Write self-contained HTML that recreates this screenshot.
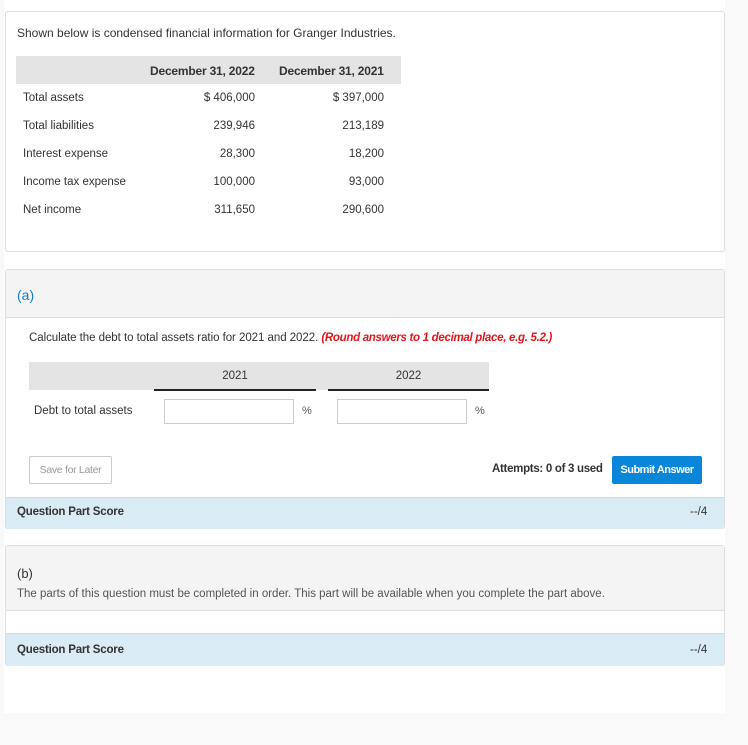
<!DOCTYPE html>
<html><head><style>
body{margin:0;background:#f9f9f9;font-family:"Liberation Sans",sans-serif;color:#333;font-size:12px;}
.wrap{position:absolute;left:4px;top:0;width:721px;height:713px;background:#fff;}
.a{position:absolute;white-space:nowrap;}
.panel{position:absolute;border:1px solid #ddd;border-radius:3px;box-sizing:border-box;background:#fff;}
.r{text-align:right;}
</style></head><body>
<div class="wrap"></div>
<div class="panel" style="left:5px;top:11px;width:720px;height:241px;"></div>
<div class="a" style="left:17px;top:26px;font-size:12px;letter-spacing:0;">Shown below is condensed financial information for Granger Industries.</div>
<div class="a" style="left:16px;top:56px;width:385px;height:28px;background:#e4e4e4;"></div>
<div class="a" style="left:150px;top:64px;font-weight:bold;font-size:12px;letter-spacing:-0.2px;">December 31, 2022</div>
<div class="a" style="left:279px;top:64px;font-weight:bold;font-size:12px;letter-spacing:-0.2px;">December 31, 2021</div>
<div style="font-size:11.5px;">
<div class="a" style="left:23px;top:92px;">Total assets</div>
<div class="a r" style="left:150px;width:105px;top:92px;">$ 406,000</div>
<div class="a r" style="left:280px;width:104px;top:92px;">$ 397,000</div>
<div class="a" style="left:23px;top:120px;">Total liabilities</div>
<div class="a r" style="left:150px;width:105px;top:120px;">239,946</div>
<div class="a r" style="left:280px;width:104px;top:120px;">213,189</div>
<div class="a" style="left:23px;top:148px;">Interest expense</div>
<div class="a r" style="left:150px;width:105px;top:148px;">28,300</div>
<div class="a r" style="left:280px;width:104px;top:148px;">18,200</div>
<div class="a" style="left:23px;top:176px;">Income tax expense</div>
<div class="a r" style="left:150px;width:105px;top:176px;">100,000</div>
<div class="a r" style="left:280px;width:104px;top:176px;">93,000</div>
<div class="a" style="left:23px;top:204px;">Net income</div>
<div class="a r" style="left:150px;width:105px;top:204px;">311,650</div>
<div class="a r" style="left:280px;width:104px;top:204px;">290,600</div>
</div>

<div class="panel" style="left:5px;top:269px;width:720px;height:260px;"></div>
<div class="a" style="left:6px;top:270px;width:718px;height:47px;background:#f4f4f4;border-bottom:1px solid #ddd;"></div>
<div class="a" style="left:17px;top:287px;font-size:14px;color:#1a7bc4;">(a)</div>
<div class="a" style="left:29px;top:332px;font-size:11.5px;letter-spacing:-0.05px;">Calculate the debt to total assets ratio for 2021 and 2022. <i style="color:#e8141c;font-weight:bold;letter-spacing:-0.3px;">(Round answers to 1 decimal place, e.g. 5.2.)</i></div>
<div class="a" style="left:29px;top:362px;width:460px;height:28px;background:#e4e4e4;"></div>
<div class="a" style="left:154px;top:389px;width:162px;height:2px;background:#222;"></div>
<div class="a" style="left:328px;top:389px;width:161px;height:2px;background:#222;"></div>
<div class="a" style="left:154px;top:370px;width:162px;text-align:center;font-size:11.5px;">2021</div>
<div class="a" style="left:328px;top:370px;width:161px;text-align:center;font-size:11.5px;">2022</div>
<div class="a" style="left:34px;top:405px;font-size:11.5px;letter-spacing:0;">Debt to total assets</div>
<div class="a" style="left:164px;top:399px;width:130px;height:25px;border:1px solid #ccc;box-sizing:border-box;"></div>
<div class="a" style="left:337px;top:399px;width:130px;height:25px;border:1px solid #ccc;box-sizing:border-box;"></div>
<div class="a" style="left:302px;top:405px;font-size:11px;color:#555;">%</div>
<div class="a" style="left:475px;top:405px;font-size:11px;color:#555;">%</div>
<div class="a" style="left:29px;top:456px;width:83px;height:28px;border:1px solid #ccc;border-radius:2px;box-sizing:border-box;font-size:10.5px;color:#999;text-align:center;line-height:27px;letter-spacing:-0.3px;">Save for Later</div>
<div class="a" style="left:492px;top:463px;font-size:11.5px;font-weight:bold;letter-spacing:-0.3px;">Attempts: 0 of 3 used</div>
<div class="a" style="left:612px;top:456px;width:90px;height:28px;background:#0a86d9;border-radius:2px;color:#fff;font-size:11px;text-align:center;line-height:28px;letter-spacing:-0.5px;font-weight:bold;">Submit Answer</div>
<div class="a" style="left:6px;top:497px;width:718px;height:31px;background:#d9ebf4;border-top:1px solid #ccdde6;"></div>
<div class="a" style="left:17px;top:506px;font-size:11.5px;font-weight:bold;letter-spacing:-0.2px;">Question Part Score</div>
<div class="a" style="left:690px;top:506px;font-size:11.5px;">--/4</div>

<div class="panel" style="left:5px;top:545px;width:720px;height:121px;"></div>
<div class="a" style="left:6px;top:546px;width:718px;height:64px;background:#f4f4f4;border-bottom:1px solid #ddd;"></div>
<div class="a" style="left:17px;top:566px;font-size:13px;">(b)</div>
<div class="a" style="left:17px;top:588px;font-size:11.5px;color:#555;letter-spacing:0;">The parts of this question must be completed in order. This part will be available when you complete the part above.</div>
<div class="a" style="left:6px;top:633px;width:718px;height:32px;background:#d9ebf4;border-top:1px solid #ccdde6;"></div>
<div class="a" style="left:17px;top:644px;font-size:11.5px;font-weight:bold;letter-spacing:-0.2px;">Question Part Score</div>
<div class="a" style="left:690px;top:644px;font-size:11.5px;">--/4</div>
</body></html>
